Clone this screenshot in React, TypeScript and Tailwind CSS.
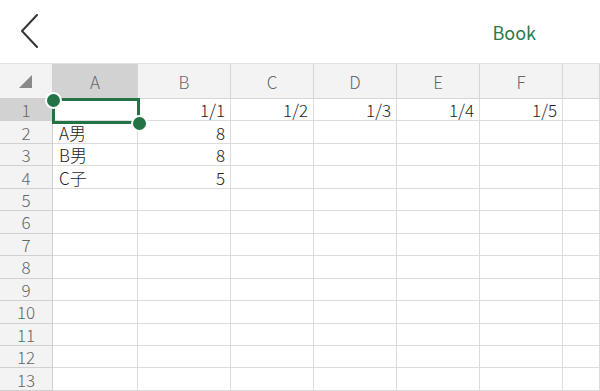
import React from "react";

const cols = ["A", "B", "C", "D", "E", "F", ""];

const data: Record<number, string[]> = {
  1: ["", "1/1", "1/2", "1/3", "1/4", "1/5", ""],
  2: ["A男", "8", "", "", "", "", ""],
  3: ["B男", "8", "", "", "", "", ""],
  4: ["C子", "5", "", "", "", "", ""],
};

const font = { fontFamily: '"Noto Sans CJK JP", "Noto Sans", sans-serif' };

export default function App() {
  const rows = Array.from({ length: 13 }, (_, i) => i + 1);

  return (
    <div className="w-[600px] h-[391px] overflow-hidden bg-white" style={font}>
      {/* top bar */}
      <div className="h-[63px] flex items-center justify-between pl-[20px] pr-[64px]">
        <svg width="20" height="34" viewBox="0 0 20 34" className="mt-[-1px]">
          <path d="M17 1 L2 17 L17 33" fill="none" stroke="#333" strokeWidth="2" strokeLinecap="round" strokeLinejoin="round" />
        </svg>
        <span className="text-[18px] text-[#2a7a4b] leading-none">Book</span>
      </div>

      <div className="relative">
        <div className="grid grid-cols-[53px_85px_93px_83px_83px_83px_83px_1fr] border-t border-[#e2e2e2]">
          {/* header row */}
          <div className="h-[35px] bg-[#f3f3f3] border-r border-b border-[#d0d0d0] flex items-end justify-end pr-[20px] pb-[10px]">
            <svg width="13" height="13" viewBox="0 0 14 14">
              <path d="M14 0 L14 14 L0 14 Z" fill="#8a8a8a" />
            </svg>
          </div>
          {cols.map((c, i) => (
            <div
              key={i}
              className={`h-[35px] border-r border-b border-[#d6d6d6] flex items-center justify-center text-[17px] leading-none font-light text-[#666] ${
                i === 0 ? "bg-[#d2d2d2]" : "bg-[#f3f3f3]"
              }`}
            >
              {c}
            </div>
          ))}

          {rows.map((r) => (
            <React.Fragment key={r}>
              <div
                className={`h-[22.46px] border-r border-b border-[#d0d0d0] flex items-center justify-center text-[17px] leading-none font-light text-[#666] ${
                  r === 1 ? "bg-[#d2d2d2]" : "bg-[#f3f3f3]"
                }`}
              >
                {r}
              </div>
              {cols.map((_, ci) => {
                const v = data[r]?.[ci] ?? "";
                const numeric = ci > 0;
                return (
                  <div
                    key={ci}
                    className={`h-[22.46px] border-r border-b border-[#dcdcdc] flex items-center text-[17px] leading-none font-light text-[#222] whitespace-nowrap ${
                      numeric ? "justify-end pr-[5px]" : "justify-start pl-[6px]"
                    }`}
                  >
                    {v}
                  </div>
                );
              })}
            </React.Fragment>
          ))}
        </div>

        {/* selection */}
        <div className="absolute left-[52px] top-[35px] w-[88px] h-[26px] border-[3px] border-[#237346]" />
        <div className="absolute left-[45px] top-[29px] w-[17px] h-[17px] rounded-full bg-[#237346] border-2 border-white" />
        <div className="absolute left-[131px] top-[52px] w-[17px] h-[17px] rounded-full bg-[#237346] border-2 border-white" />
      </div>
    </div>
  );
}
